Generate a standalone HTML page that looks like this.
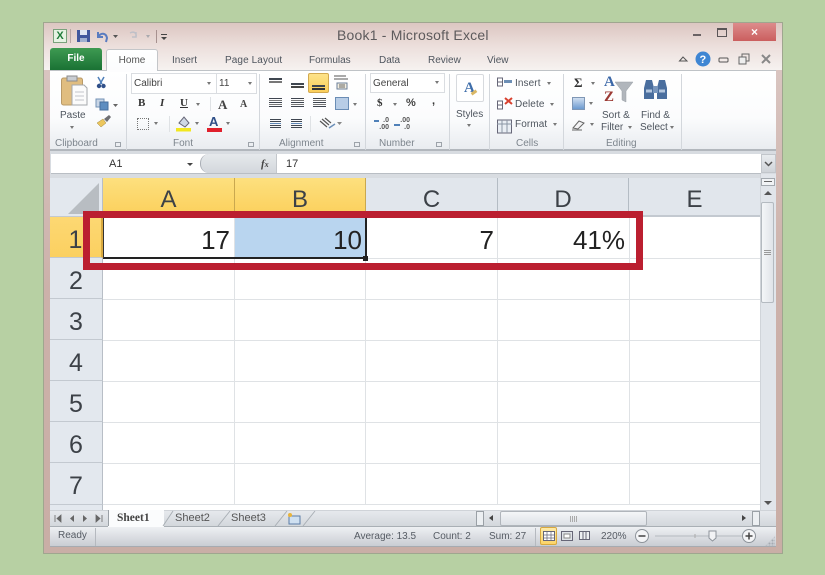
<!DOCTYPE html>
<html><head><meta charset="utf-8"><style>
html,body{margin:0;padding:0;width:825px;height:575px;overflow:hidden;background:#b7d0a3}
*{box-sizing:border-box}
#r{position:relative;width:825px;height:575px;overflow:hidden;font-family:"Liberation Sans",sans-serif;color:#4a5058}
.a{position:absolute}
.t{position:absolute;white-space:nowrap;font-size:10px;line-height:12px;color:#4e555e}
.lbl{color:#7d858d}
.ch{position:absolute;top:178px;height:39px;font-size:24px;line-height:44px;text-align:center;color:#3c4147;border-right:1px solid #b4bcc4}
.rh{position:absolute;left:50px;width:53px;height:41px;font-size:25px;line-height:46px;text-align:center;color:#3c4147;background:#e3e8ee;border-bottom:1px solid #c3c9d0;border-right:1px solid #b8bec6}
.v{position:absolute;top:217px;width:1px;height:288px;background:#dfe2e5}
.h{position:absolute;left:103px;width:657px;height:1px;background:#dfe2e5}
.n{position:absolute;font-size:26px;line-height:30px;top:225px;text-align:right;color:#222}
.sep{position:absolute;top:74px;width:1px;height:76px;background:#d3d7dc}
.ar{position:absolute;width:0;height:0;border-left:2.5px solid transparent;border-right:2.5px solid transparent;border-top:3px solid #777}
.ln{position:absolute;height:1px;background:#3f4650}
</style></head><body><div id="r">
<!-- window -->
<div class="a" style="left:43px;top:22px;width:740px;height:532px;background:linear-gradient(#dcc9c5,#ccb1aa 50%,#c9aea6);border:1px solid #9fa68f"></div>
<div class="a" style="left:44px;top:23px;width:738px;height:47px;background:linear-gradient(#dcc6c1,#ecdfdc 50%,#f6f2f0)"></div>
<!-- Title -->
<div class="a" style="left:53px;top:29px;width:14px;height:14px;background:#e6f3e3;border:1px solid #7aa27c;color:#1d7a38;font:bold 11px/12px 'Liberation Sans';text-align:center">X</div>
<div class="a" style="left:70px;top:29px;width:1px;height:14px;background:#b9a7a5"></div>
<svg class="a" style="left:76px;top:29px" width="100" height="15"><rect x="1" y="1" width="13" height="12" fill="#41589d"/><rect x="4" y="1" width="7" height="5" fill="#dfe6f2"/><rect x="4" y="9" width="7" height="4" fill="#9fb0d0"/>
<path d="M22 3v5h5M22 8c3-5 8-4 9 1l-1 4" stroke="#5a7cc0" stroke-width="2" fill="none"/><path d="M37 6l5 0-2.500 3z" fill="#555"/>
<path d="M54 4c4-2 7 0 6 4M60 3v5h-4" stroke="#bfc0c8" stroke-width="1.500" fill="none"/><path d="M70 6h4l-2 3z" fill="#a9a9ae"/>
<rect x="80" y="1" width="1" height="13" fill="#a7918f"/><rect x="85" y="5" width="6" height="1" fill="#444"/><path d="M85 8h6l-3 3z" fill="#444"/></svg>
<div class="t" style="left:337px;top:27px;font-size:14px;line-height:16px;letter-spacing:.2px;color:#5d5a5c">Book1 - Microsoft Excel</div>
<div class="a" style="left:693px;top:34px;width:8px;height:2px;background:#6a6264"></div>
<div class="a" style="left:717px;top:28px;width:10px;height:9px;border:1px solid #5a5557;border-top:2px solid #5a5557"></div>
<div class="a" style="left:733px;top:23px;width:43px;height:18px;background:linear-gradient(#dd8c8c,#cb5e5e);color:#fff;font:bold 12px/18px 'Liberation Sans';text-align:center">×</div>
<!-- tabs -->
<div class="a" style="left:50px;top:48px;width:52px;height:22px;background:linear-gradient(#3e9a52,#1a7234);border-radius:3px 3px 0 0;color:#fff;font:bold 10px/22px 'Liberation Sans';text-align:center">File</div>
<div class="a" style="left:106px;top:49px;width:52px;height:23px;background:linear-gradient(#fff,#fbfcfd);border:1px solid #c4c6c9;border-bottom:none;border-radius:3px 3px 0 0;font-size:10px;line-height:22px;text-align:center;color:#555">Home</div>
<div class="t" style="left:172px;top:55px">Insert</div>
<div class="t" style="left:225px;top:55px;letter-spacing:.1px">Page Layout</div>
<div class="t" style="left:309px;top:55px">Formulas</div>
<div class="t" style="left:379px;top:55px">Data</div>
<div class="t" style="left:428px;top:55px">Review</div>
<div class="t" style="left:487px;top:55px">View</div>
<svg class="a" style="left:676px;top:50px" width="100" height="18"><path d="M3.500 11l3.500-4 4 4z" fill="none" stroke="#555"/><circle cx="27" cy="9" r="7.500" fill="#3f86d3"/><text x="23.500" y="13" font-family="Liberation Sans" font-weight="bold" font-size="11" fill="#fff">?</text><rect x="43" y="8" width="9" height="4" rx="1" fill="none" stroke="#555"/><rect x="66" y="4" width="7" height="7" fill="none" stroke="#666"/><rect x="63" y="7" width="7" height="7" fill="#eee" stroke="#666"/><path d="M86 5l8 8M94 5l-8 8" stroke="#888" stroke-width="2"/></svg>
<!-- ribbon -->
<div class="a" style="left:50px;top:70px;width:726px;height:1px;background:#bfc3c7"></div>
<div class="a" style="left:50px;top:71px;width:726px;height:80px;background:linear-gradient(#fff,#fbfcfd 60%,#e9ecf0);border-bottom:2px solid #b2b7bd"></div>
<div class="a" style="left:107px;top:70px;width:50px;height:2px;background:#fdfdfe"></div>
<div class="sep" style="left:126px"></div><div class="sep" style="left:259px"></div><div class="sep" style="left:365px"></div><div class="sep" style="left:449px"></div><div class="sep" style="left:489px"></div><div class="sep" style="left:563px"></div><div class="sep" style="left:681px"></div>
<!-- clipboard -->
<svg class="a" style="left:60px;top:74px" width="65" height="60"><rect x="1.500" y="4" width="21" height="27" rx="2" fill="#e0bd80" stroke="#b99a68"/><rect x="7" y="2" width="10" height="5" fill="#c9cdd2" stroke="#8c8c8c"/><path d="M12 11h12l3 3v17H12z" fill="#fbfbfb" stroke="#a5a8ac"/><path d="M15 18h9M15 22h9M15 26h9" stroke="#c3c6cb"/>
<path d="M38 3l4 7M44 3l-4 7" stroke="#4f7fb9" stroke-width="1.500"/><circle cx="39" cy="12" r="2.200" fill="#2f4f88"/><circle cx="43.500" cy="12" r="2.200" fill="#2f4f88"/>
<rect x="36" y="25" width="8" height="8" fill="#c9d6e6" stroke="#7392b5"/><rect x="40" y="28" width="8" height="8" fill="#5d8dc0" stroke="#46709e"/><path d="M53 30h5l-2.500 3z" fill="#666"/>
<path d="M37 49l6-4 3 4-5 4z" fill="#ecc65d" stroke="#a18a42" stroke-width=".5"/><path d="M44 45l5-4 2 2-4 5z" fill="#6e6f73"/></svg>
<div class="t" style="left:60px;top:110px">Paste</div>
<div class="ar" style="left:70px;top:126px"></div>
<div class="t lbl" style="left:55px;top:138px">Clipboard</div>
<div class="a" style="left:115px;top:142px;width:6px;height:5px;border:1px solid #9da3aa"></div>
<!-- font -->
<div class="a" style="left:131px;top:73px;width:86px;height:21px;background:#fff;border:1px solid #dadde1"></div>
<div class="a" style="left:216px;top:73px;width:41px;height:21px;background:#fff;border:1px solid #dadde1"></div>
<div class="t" style="left:134px;top:78px;color:#444">Calibri</div>
<div class="ar" style="left:207px;top:82px"></div>
<div class="t" style="left:219px;top:78px;color:#444">11</div>
<div class="ar" style="left:248px;top:82px"></div>
<div class="t" style="left:138px;top:97px;font:bold 11px/13px 'Liberation Serif';color:#333">B</div>
<div class="t" style="left:160px;top:97px;font:italic bold 11px/13px 'Liberation Serif';color:#333">I</div>
<div class="t" style="left:180px;top:97px;font:bold 11px/13px 'Liberation Serif';color:#333;text-decoration:underline">U</div>
<div class="ar" style="left:196px;top:103px"></div>
<div class="a" style="left:210px;top:97px;width:1px;height:14px;background:#dfe2e5"></div>
<div class="t" style="left:218px;top:97px;font:bold 13px/15px 'Liberation Serif';color:#444">A</div>
<div class="t" style="left:240px;top:99px;font:bold 10px/12px 'Liberation Serif';color:#444">A</div>
<div class="a" style="left:137px;top:118px;width:12px;height:12px;border:1px dotted #777"></div>
<div class="ar" style="left:154px;top:122px"></div>
<div class="a" style="left:169px;top:116px;width:1px;height:16px;background:#dfe2e5"></div>
<svg class="a" style="left:176px;top:115px" width="16" height="18"><path d="M3 8l5-6 5 6-4 4z" fill="#cfd8e4" stroke="#667"/><rect x="0" y="13" width="15" height="3.500" fill="#f2e71f"/></svg>
<div class="ar" style="left:195px;top:122px"></div>
<div class="t" style="left:209px;top:114px;font:bold 13px/15px 'Liberation Sans';color:#2f4f88">A</div>
<div class="a" style="left:207px;top:128px;width:15px;height:4px;background:#e0202c"></div>
<div class="ar" style="left:226px;top:122px"></div>
<div class="t lbl" style="left:173px;top:138px">Font</div>
<div class="a" style="left:248px;top:142px;width:6px;height:5px;border:1px solid #9da3aa"></div>
<!-- alignment -->
<div class="a" style="left:308px;top:73px;width:21px;height:20px;background:linear-gradient(#fde38a,#fbcf5a);border:1px solid #d2a94f;border-radius:2px"></div>
<div class="ln" style="left:269px;top:78px;width:13px;height:2px;box-shadow:0 3px 0 #777"></div>
<div class="ln" style="left:291px;top:83px;width:13px;height:2px;box-shadow:0 3px 0 #444"></div>
<div class="ln" style="left:312px;top:85px;width:13px;height:2px;box-shadow:0 3px 0 #333"></div>
<svg class="a" style="left:334px;top:75px" width="16" height="16"><path d="M0 1h12M0 4h14" stroke="#555"/><path d="M3 8h10v6H3z" stroke="#6b7f99" fill="#f3eee0"/><path d="M5 10h6M5 12h6" stroke="#666"/></svg>
<div class="ln" style="left:269px;top:98px;width:13px;box-shadow:0 2px 0 #777,0 4px 0 #3f4650,0 6px 0 #777,0 8px 0 #3f4650"></div>
<div class="ln" style="left:291px;top:98px;width:13px;box-shadow:0 2px 0 #777,0 4px 0 #3f4650,0 6px 0 #777,0 8px 0 #3f4650"></div>
<div class="ln" style="left:313px;top:98px;width:13px;box-shadow:0 2px 0 #777,0 4px 0 #3f4650,0 6px 0 #777,0 8px 0 #3f4650"></div>
<div class="a" style="left:335px;top:97px;width:14px;height:13px;background:#b8cde6;border:1px solid #6a8db5"></div>
<div class="ar" style="left:353px;top:103px"></div>
<div class="ln" style="left:270px;top:119px;width:11px;box-shadow:0 2px 0 #3f4650,0 4px 0 #5e86b4,0 6px 0 #3f4650,0 8px 0 #3f4650"></div>
<div class="ln" style="left:291px;top:119px;width:11px;box-shadow:0 2px 0 #3f4650,0 4px 0 #5e86b4,0 6px 0 #3f4650,0 8px 0 #3f4650"></div>
<div class="a" style="left:310px;top:116px;width:1px;height:16px;background:#dfe2e5"></div>
<svg class="a" style="left:319px;top:117px" width="24" height="13"><path d="M1 4l7 6M3 2l7 6M6 1l6 5" stroke="#555" stroke-width="1.200"/><path d="M10 11l6-4" stroke="#6b8eb8" stroke-width="1.500"/><path d="M18 5h5l-2.500 3z" fill="#888"/></svg>
<div class="t lbl" style="left:279px;top:138px">Alignment</div>
<div class="a" style="left:354px;top:142px;width:6px;height:5px;border:1px solid #9da3aa"></div>
<!-- number -->
<div class="a" style="left:370px;top:73px;width:75px;height:20px;background:#fff;border:1px solid #dadde1"></div>
<div class="t" style="left:373px;top:78px;color:#444">General</div>
<div class="ar" style="left:435px;top:81px"></div>
<div class="t" style="left:377px;top:97px;font:bold 11px/13px 'Liberation Serif';color:#333">$</div>
<div class="ar" style="left:393px;top:103px"></div>
<div class="t" style="left:406px;top:97px;font:bold 11px/13px 'Liberation Sans';color:#444">%</div>
<div class="t" style="left:432px;top:95px;font:bold 11px/13px 'Liberation Sans';color:#333">,</div>
<div class="t" style="left:378px;top:117px;font:bold 7px/7px 'Liberation Sans';color:#555;text-align:right;width:11px">.0<br>.00</div>
<div class="t" style="left:397px;top:117px;font:bold 7px/7px 'Liberation Sans';color:#555;text-align:right;width:13px">.00<br>.0</div>
<div class="a" style="left:374px;top:120px;width:5px;height:2px;background:#4f80b8"></div>
<div class="a" style="left:394px;top:124px;width:6px;height:2px;background:#4f80b8"></div>
<div class="t lbl" style="left:379px;top:138px">Number</div>
<div class="a" style="left:436px;top:142px;width:6px;height:5px;border:1px solid #9da3aa"></div>
<!-- styles -->
<div class="a" style="left:456px;top:74px;width:28px;height:28px;background:#fff;border:1px solid #d7dade;border-radius:2px"></div>
<div class="t" style="left:464px;top:80px;font:bold 15px/17px 'Liberation Serif';color:#3f6eaa">A</div>
<div class="a" style="left:471px;top:91px;width:6px;height:3px;background:#d9b765;transform:rotate(-35deg)"></div>
<div class="t" style="left:456px;top:109px">Styles</div>
<div class="ar" style="left:467px;top:124px"></div>
<!-- cells -->
<svg class="a" style="left:496px;top:76px" width="20" height="60"><path d="M1.500 2h5v4h-5zM1.500 6h5v4h-5z" fill="#fff" stroke="#667"/><rect x="8" y="4" width="8" height="3" fill="#6d8fb5"/><path d="M1.500 25h5v4h-5zM1.500 29h5v4h-5z" fill="#fff" stroke="#667"/><path d="M9 22l7 6M16 22l-7 6" stroke="#d8412f" stroke-width="2"/><rect x="1.500" y="44" width="14" height="13" fill="#e9eef4" stroke="#667"/><path d="M1 48h15M6 44v13M11 44v13" stroke="#8a96a5"/></svg>
<div class="t" style="left:515px;top:78px;letter-spacing:.1px">Insert</div><div class="ar" style="left:547px;top:82px"></div>
<div class="t" style="left:515px;top:99px;letter-spacing:.1px">Delete</div><div class="ar" style="left:550px;top:103px"></div>
<div class="t" style="left:515px;top:119px;letter-spacing:.1px">Format</div><div class="ar" style="left:553px;top:123px"></div>
<div class="t lbl" style="left:516px;top:138px">Cells</div>
<!-- editing -->
<div class="t" style="left:574px;top:75px;font:bold 13px/15px 'Liberation Serif';color:#333">Σ</div><div class="ar" style="left:591px;top:82px"></div>
<div class="a" style="left:572px;top:97px;width:13px;height:13px;background:linear-gradient(#cfdef0,#6d9bd0);border:1px solid #7f97b5"></div><div class="ar" style="left:589px;top:102px"></div>
<svg class="a" style="left:571px;top:118px" width="16" height="13"><path d="M2 10l6-7 5 2-6 6z" fill="#f3f3f5" stroke="#666"/><path d="M1 12h10" stroke="#666"/></svg><div class="ar" style="left:590px;top:123px"></div>
<div class="t" style="left:604px;top:75px;font:bold 15px/14px 'Liberation Serif';color:#3c68a8">A</div>
<div class="t" style="left:604px;top:90px;font:bold 15px/15px 'Liberation Serif';color:#9c3a34">Z</div>
<svg class="a" style="left:614px;top:81px" width="20" height="24"><path d="M1 1h18l-7 9v11l-4-2v-9z" fill="#b1b6bc" stroke="#999fa6" stroke-width=".5"/></svg>
<svg class="a" style="left:642px;top:77px" width="28" height="26"><path d="M2 11l2-8h6l2 8v11H2z" fill="#4a6e9e"/><path d="M15 11l2-8h6l2 8v11H15z" fill="#4a6e9e"/><rect x="11" y="9" width="5" height="7" fill="#7896bd"/><path d="M4 14h6M17 14h6" stroke="#b4c7df" stroke-width="3"/></svg>
<div class="t" style="left:602px;top:110px">Sort &amp;</div>
<div class="t" style="left:601px;top:122px">Filter</div><div class="ar" style="left:628px;top:126px"></div>
<div class="t" style="left:641px;top:110px">Find &amp;</div>
<div class="t" style="left:640px;top:122px">Select</div><div class="ar" style="left:670px;top:126px"></div>
<div class="t lbl" style="left:606px;top:138px">Editing</div>
<!-- formula bar -->
<div class="a" style="left:50px;top:151px;width:726px;height:27px;background:#d8dce1"></div>
<div class="a" style="left:51px;top:154px;width:710px;height:20px;background:#fff;border-bottom:1px solid #b9bec4"></div>
<div class="t" style="left:109px;top:158px;font-size:11px;color:#333">A1</div>
<div class="a" style="left:187px;top:163px;width:0;height:0;border-left:3.5px solid transparent;border-right:3.500px solid transparent;border-top:3.500px solid #444"></div>
<div class="a" style="left:200px;top:154px;width:76px;height:19px;background:linear-gradient(#e6e9ec,#d3d7dc);border-radius:9px 0 0 9px;border-left:1px solid #a9aeb5"></div>
<div class="a" style="left:276px;top:154px;width:1px;height:19px;background:#c3c7cc"></div>
<div class="t" style="left:261px;top:158px;font:italic bold 11px/13px 'Liberation Serif';color:#444">f<span style="font-size:8px">x</span></div>
<div class="t" style="left:286px;top:158px;font-size:11px;color:#333">17</div>
<div class="a" style="left:761px;top:154px;width:15px;height:19px;background:linear-gradient(#e9ecef,#cfd3d8);border:1px solid #c2c6cb"></div>
<svg class="a" style="left:764px;top:161px" width="9" height="7"><path d="M1 1l3.500 3.500L8 1" fill="none" stroke="#555" stroke-width="1.500"/></svg>
<!-- grid base -->
<div class="a" style="left:50px;top:178px;width:726px;height:333px;background:#fff"></div>
<div class="a" style="left:50px;top:178px;width:53px;height:39px;background:#e3e8ee;border-right:1px solid #b8bec6;border-bottom:1px solid #c3c9d0"></div>
<svg class="a" style="left:66px;top:181px" width="36" height="35"><path d="M33 2v31H2z" fill="#b8bdc2"/></svg>
<div class="ch" style="left:103px;width:132px;background:linear-gradient(#fde07e,#fbd05c);border-right:1px solid #c9a84f;border-bottom:2px solid #e9b94a">A</div>
<div class="ch" style="left:235px;width:131px;background:linear-gradient(#fde07e,#fbd05c);border-right:1px solid #c9a84f;border-bottom:2px solid #e9b94a">B</div>
<div class="ch" style="left:366px;width:132px;background:#e1e6ec;border-bottom:2px solid #c3c9d0">C</div>
<div class="ch" style="left:498px;width:131px;background:#e1e6ec;border-bottom:2px solid #c3c9d0">D</div>
<div class="ch" style="left:629px;width:131px;background:#e1e6ec;border-bottom:2px solid #c3c9d0;border-right:none">E</div>
<div class="rh" style="top:217px;background:linear-gradient(#fdd873,#fbd060);border-right:2px solid #d9a93f">1</div>
<div class="rh" style="top:258px">2</div><div class="rh" style="top:299px">3</div><div class="rh" style="top:340px">4</div><div class="rh" style="top:381px">5</div><div class="rh" style="top:422px">6</div><div class="rh" style="top:463px;height:42px">7</div>
<div class="a" style="left:50px;top:505px;width:53px;height:6px;background:#e3e8ee;border-right:1px solid #b8bec6"></div>
<div class="v" style="left:234px"></div><div class="v" style="left:365px"></div><div class="v" style="left:497px"></div><div class="v" style="left:629px"></div>
<div class="h" style="top:258px"></div><div class="h" style="top:299px"></div><div class="h" style="top:340px"></div><div class="h" style="top:381px"></div><div class="h" style="top:422px"></div><div class="h" style="top:463px"></div><div class="h" style="top:504px"></div>
<!-- selection -->
<div class="a" style="left:235px;top:218px;width:131px;height:40px;background:#b9d5ef"></div>
<div class="a" style="left:103px;top:257px;width:263px;height:2px;background:#222"></div>
<div class="a" style="left:365px;top:218px;width:2px;height:40px;background:#222"></div>
<div class="a" style="left:103px;top:218px;width:1px;height:40px;background:#333"></div>
<div class="a" style="left:363px;top:256px;width:5px;height:5px;background:#222;border:1px solid #222"></div>
<div class="n" style="left:103px;width:127px">17</div>
<div class="n" style="left:235px;width:127px">10</div>
<div class="n" style="left:366px;width:128px">7</div>
<div class="n" style="left:498px;width:127px">41%</div>
<div class="a" style="left:83px;top:211px;width:560px;height:59px;border:7px solid #bb1f30"></div>
<!-- v scroll -->
<div class="a" style="left:760px;top:174px;width:16px;height:336px;background:#e1e5ea;border-left:1px solid #d0d4d9"></div>
<div class="a" style="left:761px;top:178px;width:14px;height:8px;background:#f1f3f5;border:1px solid #a3a9af"></div>
<div class="a" style="left:764px;top:181px;width:8px;height:1px;background:#666"></div>
<div class="a" style="left:764px;top:191px;width:0;height:0;border-left:4px solid transparent;border-right:4px solid transparent;border-bottom:4px solid #555"></div>
<div class="a" style="left:761px;top:202px;width:13px;height:101px;background:linear-gradient(90deg,#f4f6f8,#dfe3e8);border:1px solid #b4bac0;border-radius:2px"></div>
<div class="a" style="left:764px;top:250px;width:7px;height:1px;background:#999;box-shadow:0 2px 0 #999,0 4px 0 #999"></div>
<div class="a" style="left:764px;top:501px;width:0;height:0;border-left:4px solid transparent;border-right:4px solid transparent;border-top:4px solid #555"></div>
<!-- sheet tabs -->
<div class="a" style="left:50px;top:510px;width:726px;height:17px;background:linear-gradient(#e6e9ed,#d3d7dc);border-top:1px solid #cfd3d8;border-bottom:1px solid #a9afb5"></div>
<div class="a" style="left:108px;top:510px;width:56px;height:17px;background:#fbfcfd"></div>
<svg class="a" style="left:52px;top:512px" width="54" height="13"><path d="M3 3v7M9 3L5 6.500 9 10z" fill="#666" stroke="#666" stroke-width=".8"/><path d="M22 3l-4 3.500 4 3.500z" fill="#666"/><path d="M31 3l4 3.500-4 3.500z" fill="#666"/><path d="M44 3l4 3.500-4 3.500zM50 3v7" fill="#666" stroke="#666" stroke-width=".8"/></svg>
<div class="a" style="left:108px;top:510px;width:1px;height:16px;background:#9aa0a6"></div>
<div class="t" style="left:117px;top:512px;font:bold 11.500px/13px 'Liberation Serif';color:#444">Sheet1</div>
<div class="t" style="left:175px;top:512px;font-size:11px;line-height:13px;color:#555">Sheet2</div>
<div class="t" style="left:231px;top:512px;font-size:11px;line-height:13px;color:#555">Sheet3</div>
<svg class="a" style="left:160px;top:510px" width="160" height="17"><path d="M3 16L13 1M58 16L70 1M115 16L127 1M143 16L155 1" stroke="#a9afb5" fill="none"/><rect x="129" y="6" width="11" height="8" fill="#cfe0f1" stroke="#5c7da6"/><circle cx="130" cy="5" r="2" fill="#eab53c"/></svg>
<div class="a" style="left:476px;top:511px;width:8px;height:15px;background:#eceff2;border:1px solid #9aa0a6"></div>
<div class="a" style="left:489px;top:515px;width:0;height:0;border-top:3.500px solid transparent;border-bottom:3.500px solid transparent;border-right:4px solid #444"></div>
<div class="a" style="left:500px;top:511px;width:147px;height:15px;background:linear-gradient(#f4f6f8,#dde1e6);border:1px solid #b0b5bb;border-radius:2px"></div>
<div class="a" style="left:570px;top:516px;width:7px;height:6px;background:repeating-linear-gradient(90deg,#aaa 0 1px,transparent 1px 2px)"></div>
<div class="a" style="left:742px;top:515px;width:0;height:0;border-top:3.500px solid transparent;border-bottom:3.500px solid transparent;border-left:4px solid #444"></div>
<div class="a" style="left:752px;top:511px;width:8px;height:15px;background:#eceff2;border:1px solid #9aa0a6"></div>
<!-- status -->
<div class="a" style="left:50px;top:527px;width:726px;height:20px;background:linear-gradient(#eef0f3,#c9cdd3);border-bottom:1px solid #a6abb1"></div>
<div class="a" style="left:95px;top:528px;width:1px;height:18px;background:#b5b9bf"></div>
<div class="t" style="left:58px;top:530px;color:#565c64">Ready</div>
<div class="t" style="left:354px;top:531px;color:#565c64">Average: 13.5</div>
<div class="t" style="left:433px;top:531px;color:#565c64">Count: 2</div>
<div class="t" style="left:489px;top:531px;color:#565c64">Sum: 27</div>
<div class="a" style="left:535px;top:528px;width:1px;height:18px;background:#b5b9bf"></div>
<div class="a" style="left:540px;top:527px;width:17px;height:18px;background:linear-gradient(#fdeaa8,#fbd468);border:1px solid #d9a93f;border-radius:2px"></div>
<svg class="a" style="left:543px;top:530px" width="52" height="12"><rect x=".5" y="1.500" width="11" height="9" fill="#fff" stroke="#667"/><path d="M0 5h11M0 8h11M4 1v9M8 1v9" stroke="#667" stroke-width=".7"/><rect x="18.500" y="1.500" width="11" height="9" fill="#dfe3e8" stroke="#667"/><rect x="21" y="4" width="6" height="4" fill="#fff" stroke="#888"/><rect x="36.500" y="1.500" width="10" height="8" fill="#eef0f3" stroke="#667"/><path d="M40 1v8M43 1v8" stroke="#667"/></svg>
<div class="t" style="left:601px;top:531px;color:#565c64">220%</div>
<svg class="a" style="left:633px;top:526px" width="128" height="20"><path d="M22 10H110" stroke="#b4b9bf"/><path d="M62 8v4" stroke="#aaa"/><circle cx="9" cy="10" r="6.500" fill="#f4f5f7" stroke="#8d939a"/><path d="M5.500 10h7" stroke="#444" stroke-width="1.500"/><circle cx="116" cy="10" r="6.500" fill="#f4f5f7" stroke="#8d939a"/><path d="M112.500 10h7M116 6.500v7" stroke="#444" stroke-width="1.500"/><path d="M76 5h7v7l-3.500 3-3.500-3z" fill="#f2f3f5" stroke="#8d939a"/></svg>
<div class="a" style="left:765px;top:536px;width:10px;height:10px;background:radial-gradient(#a5abb2 1px,transparent 1.200px) 0 0/3px 3px;clip-path:polygon(100% 0,100% 100%,0 100%)"></div>
</div></body></html>
